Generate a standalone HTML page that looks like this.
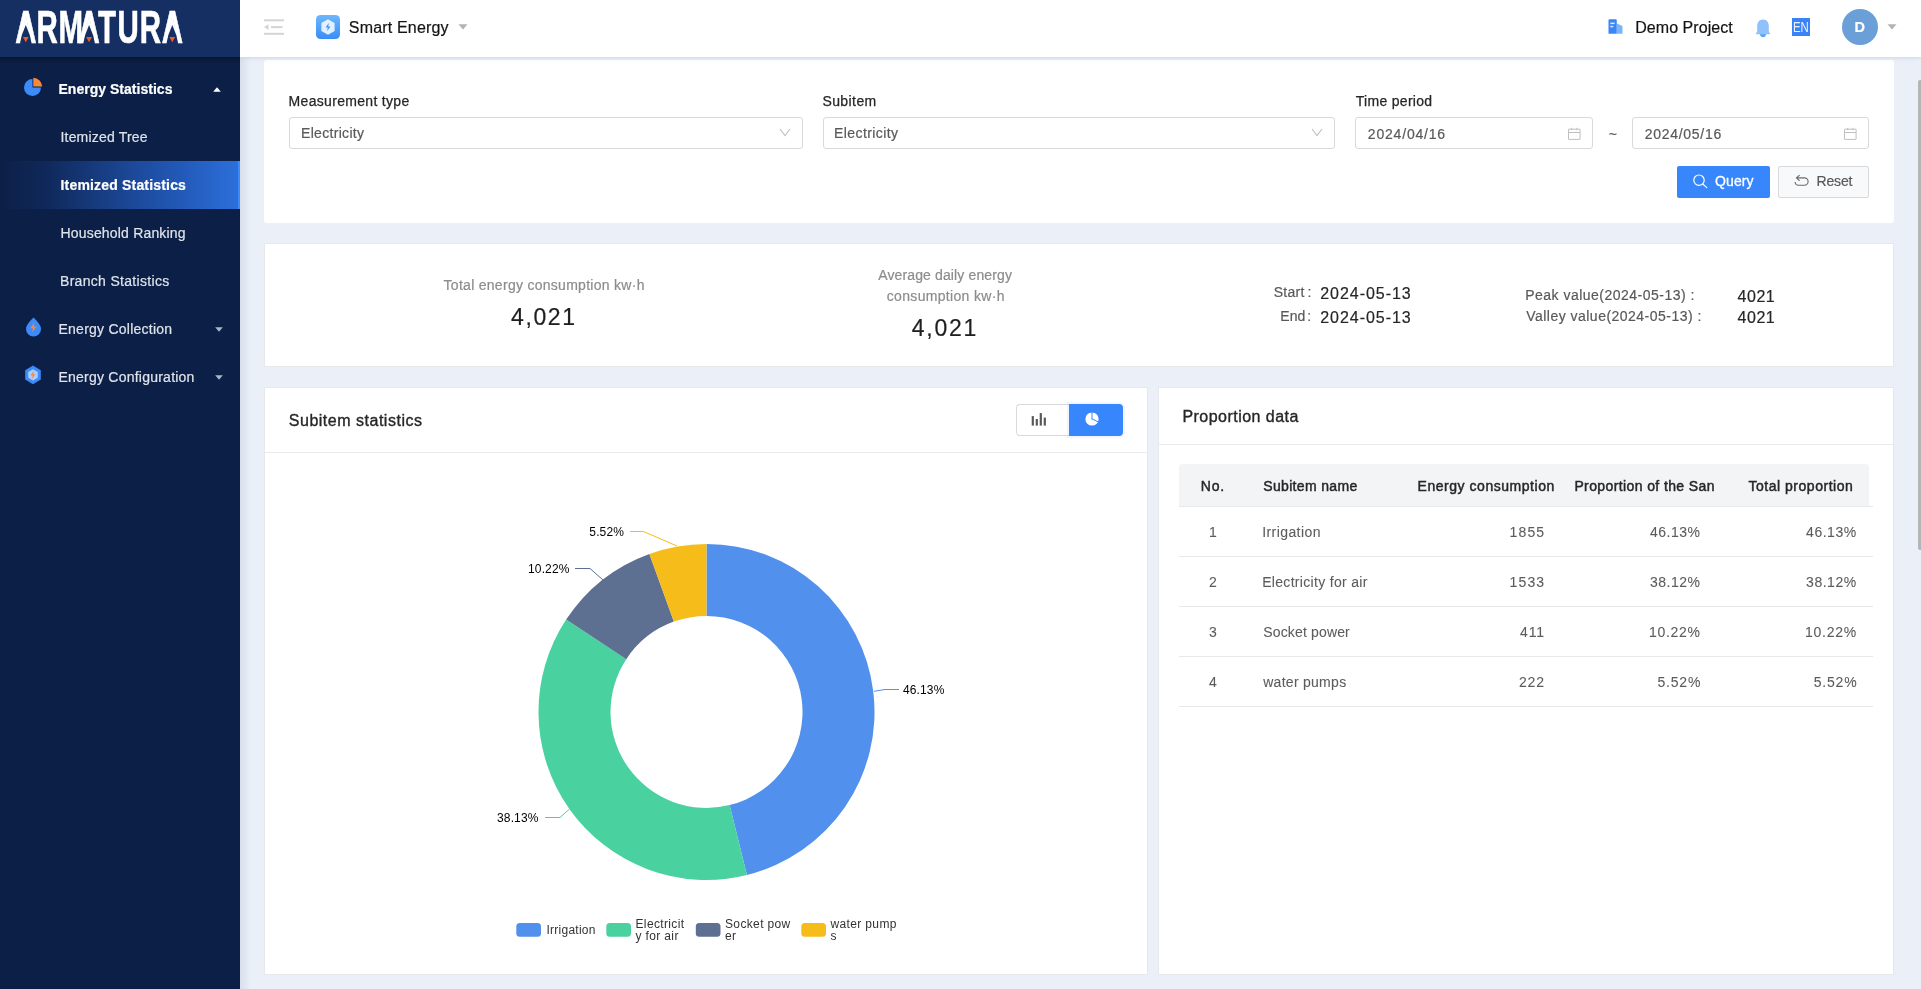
<!DOCTYPE html>
<html lang="en">
<head>
<meta charset="utf-8">
<title>Smart Energy - Itemized Statistics</title>
<style>
*{box-sizing:border-box;margin:0;padding:0}
html,body{width:1921px;height:989px;overflow:hidden}
body{font-family:"Liberation Sans",sans-serif;background:#ebf0f8;color:#1f1f1f;position:relative}
.abs{position:absolute}
.t{position:absolute;white-space:nowrap;line-height:1;-webkit-text-stroke:0.2px}
/* sidebar */
#side{position:absolute;left:0;top:0;width:240px;height:989px;background:#0c1f47}
#logo{position:absolute;left:0;top:0;width:240px;height:57px;background:#152f63}
#sideshadow{position:absolute;left:240px;top:57px;width:11px;height:932px;background:linear-gradient(90deg,rgba(190,200,215,.42),rgba(235,240,248,0))}
.mi{color:#dfe3ea;font-size:14px}
.mib{color:#fff;font-size:14px;font-weight:bold}
#active{position:absolute;left:0;top:161px;width:240px;height:48px;background:linear-gradient(90deg,#0c1f47 0%,#10295b 20%,#1a4490 50%,#2259b8 75%,#2c6fda 99.100%,#3b8bff 99.200%)}
/* header */
#hdr{position:absolute;left:240px;top:0;width:1681px;height:57px;background:#fff;box-shadow:0 1px 4px rgba(120,140,170,.26)}
/* cards */
.card{position:absolute;background:#fff}
.inp{position:absolute;height:32px;border:1px solid #d9d9d9;border-radius:3px;background:#fff}
.lbl{font-size:14px;color:#262626;-webkit-text-stroke:0.25px}
.val{font-size:14px;color:#595959}
.th{font-size:14px;color:#262626;-webkit-text-stroke:0.45px #262626}
.td{font-size:14px;color:#5c5c5c;-webkit-text-stroke:0.08px}
</style>
</head>
<body>
<div id="root" style="position:absolute;left:0;top:0;width:1921px;height:989px;will-change:transform;background:#ebf0f8">
<!-- CONTENT -->
<div id="content">
 <!-- filter card -->
 <div class="card" style="left:264px;top:60px;width:1630px;height:163px;border-radius:3px"></div>
 <div class="t lbl" id="f_l1" style="left:288.6px;letter-spacing:0.31px;top:94px">Measurement type</div>
 <div class="inp" style="left:289px;top:117px;width:514px"></div>
 <div class="t val" id="f_v1" style="left:301px;letter-spacing:0.31px;top:126px">Electricity</div>
 <svg class="abs" style="left:779px;top:128.200px" width="12" height="9" viewBox="0 0 12 9"><path d="M1 1 L6 7.5 L11 1" fill="none" stroke="#bfbfbf" stroke-width="1.1"/></svg>
 <div class="t lbl" id="f_l2" style="left:822.4px;letter-spacing:0.42px;top:94px">Subitem</div>
 <div class="inp" style="left:823px;top:117px;width:512px"></div>
 <div class="t val" id="f_v2" style="left:834px;letter-spacing:0.42px;top:126px">Electricity</div>
 <svg class="abs" style="left:1311px;top:128.200px" width="12" height="9" viewBox="0 0 12 9"><path d="M1 1 L6 7.5 L11 1" fill="none" stroke="#bfbfbf" stroke-width="1.1"/></svg>
 <div class="t lbl" id="f_l3" style="left:1355.8px;letter-spacing:0.29px;top:94px">Time period</div>
 <div class="inp" style="left:1355px;top:117px;width:238px"></div>
 <div class="t val" id="f_v3" style="left:1367.8px;letter-spacing:0.81px;top:127px">2024/04/16</div>
 <svg class="abs cal" style="left:1567.700px;top:126.800px" width="13" height="13" viewBox="0 0 13 13"><g fill="none" stroke="#bfbfbf" stroke-width="1"><rect x="0.500" y="2.200" width="11.600" height="10.200" rx="0.300"/><path d="M0.500 5.500 H12 M3.700 0.800 V3.200 M8.900 0.800 V3.200"/></g></svg>
 <div class="t val" id="f_tl" style="left:1608.800px;top:127px">~</div>
 <div class="inp" style="left:1632px;top:117px;width:237px"></div>
 <div class="t val" id="f_v4" style="left:1644.8px;letter-spacing:0.7px;top:127px">2024/05/16</div>
 <svg class="abs cal" style="left:1843.700px;top:126.800px" width="13" height="13" viewBox="0 0 13 13"><g fill="none" stroke="#bfbfbf" stroke-width="1"><rect x="0.500" y="2.200" width="11.600" height="10.200" rx="0.300"/><path d="M0.500 5.500 H12 M3.700 0.800 V3.200 M8.900 0.800 V3.200"/></g></svg>
 <div class="abs" style="left:1677px;top:166px;width:93px;height:32px;background:#3786fb;border-radius:2px"></div>
 <svg class="abs" style="left:1692px;top:173px" width="16" height="16" viewBox="0 0 16 16"><circle cx="7" cy="7.200" r="5.200" fill="none" stroke="#fff" stroke-width="1.200"/><path d="M10.800 11 L14.800 14.600" stroke="#fff" stroke-width="1.200" stroke-linecap="round"/></svg>
 <div class="t" id="b_q" style="left:1715px;letter-spacing:0.12px;top:174px;font-size:14px;color:#fff;-webkit-text-stroke:0.3px #fff">Query</div>
 <div class="abs" style="left:1778px;top:166px;width:91px;height:32px;background:#f8f9fa;border:1px solid #d9d9d9;border-radius:2px"></div>
 <svg class="abs" style="left:1794px;top:174px" width="16" height="13" viewBox="0 0 16 13"><path d="M2.800 3.900 H10.400 A3.700 3.700 0 0 1 10.400 11.300 H4.600 Q1.400 11.300 1.100 8.300 M5.300 1.300 L2.400 3.900 L5.300 6.500" fill="none" stroke="#6b6b6b" stroke-width="1.100" stroke-linecap="round" stroke-linejoin="round"/></svg>
 <div class="t" id="b_r" style="left:1816.4px;letter-spacing:-0.12px;top:174px;font-size:14px;color:#595959">Reset</div>

 <!-- stats card -->
 <div class="card" style="left:264px;top:243px;width:1630px;height:124px;border:1px solid #e6e8ec"></div>
 <div class="t" id="s_t1" style="left:443.6px;letter-spacing:0.28px;top:278px;font-size:14px;color:#8c8c8c">Total energy consumption kw·h</div>
 <div class="t" id="s_n1" style="left:511px;letter-spacing:1.6px;top:306px;font-size:23px;color:#1f1f1f">4,021</div>
 <div class="t" id="s_t2" style="left:878.2px;letter-spacing:0.13px;top:268px;font-size:14px;color:#8c8c8c">Average daily energy</div>
 <div class="t" id="s_t3" style="left:886.8px;letter-spacing:0.32px;top:289px;font-size:14px;color:#8c8c8c">consumption kw·h</div>
 <div class="t" id="s_n2" style="left:911.8px;letter-spacing:1.75px;top:317px;font-size:23px;color:#1f1f1f">4,021</div>
 <div class="t" id="s_st" style="left:1273.700px;top:285px;font-size:14px;color:#595959;letter-spacing:0.300px">Start<span style="margin-left:2.800px">:</span></div>
 <div class="t" id="s_sd" style="left:1320.2px;letter-spacing:0.97px;top:286px;font-size:16px;color:#262626">2024-05-13</div>
 <div class="t" id="s_en" style="left:1280.300px;top:309px;font-size:14px;color:#595959">End<span style="margin-left:2px">:</span></div>
 <div class="t" id="s_ed" style="left:1320.2px;letter-spacing:0.97px;top:310px;font-size:16px;color:#262626">2024-05-13</div>
 <div class="t" id="s_pk" style="left:1525.2px;letter-spacing:0.49px;top:288px;font-size:14px;color:#595959">Peak value(2024-05-13) :</div>
 <div class="t" id="s_vl" style="left:1526.2px;letter-spacing:0.48px;top:309px;font-size:14px;color:#595959">Valley value(2024-05-13) :</div>
 <div class="t" id="s_pv" style="left:1737.6px;letter-spacing:0.5px;top:289px;font-size:16px;color:#262626">4021</div>
 <div class="t" id="s_vv" style="left:1737.6px;letter-spacing:0.5px;top:310px;font-size:16px;color:#262626">4021</div>

 <!-- chart card -->
 <div class="card" style="left:264px;top:387px;width:884px;height:588px;border:1px solid #e6e8ec"></div>
 <div class="abs" style="left:265px;top:452px;width:882px;height:1px;background:#ebebeb"></div>
 <div class="t" id="c_t" style="left:288.8px;letter-spacing:0.51px;top:413px;font-size:16px;color:#262626;-webkit-text-stroke:0.35px">Subitem statistics</div>
 <div class="abs" style="left:1016px;top:404px;width:54px;height:32px;background:#fff;border:1px solid #d9d9d9;border-right:0;border-radius:4px 0 0 4px"></div>
 <div class="abs" style="left:1069px;top:404px;width:54px;height:32px;background:#3786fb;border-radius:0 4px 4px 0;box-shadow:0 0 0 2px rgba(58,133,248,.08)"></div>
 <svg class="abs" style="left:1031px;top:412px" width="16" height="15" viewBox="0 0 16 15"><g fill="#595959"><rect x="0.700" y="4.100" width="2.200" height="9.500"/><rect x="4.700" y="7" width="2.200" height="6.600"/><rect x="8.700" y="1.100" width="2.200" height="12.500"/><rect x="12.700" y="5.600" width="2.200" height="8"/></g></svg>
 <svg class="abs" style="left:1083.500px;top:411.400px" width="16" height="16" viewBox="0 0 16 16"><circle cx="8" cy="8" r="6.600" fill="#fff"/><path d="M8 8.300 V0.800 M7.700 7.800 L14.800 11.100" stroke="#3786fb" stroke-width="1" fill="none"/></svg>
 <svg class="abs" id="pie" style="left:265px;top:453px" width="881" height="520" viewBox="265 453 881 520" font-family="Liberation Sans, sans-serif">
  <path d="M706.50 543.90 A168 168 0 0 1 746.95 874.96 L729.61 805.08 A96 96 0 0 0 706.50 615.90Z" fill="#5190ec"/>
  <path d="M746.95 874.96 A168 168 0 0 1 566.14 619.58 L626.30 659.14 A96 96 0 0 0 729.61 805.08Z" fill="#4ad1a0"/>
  <path d="M566.14 619.58 A168 168 0 0 1 649.39 553.90 L673.87 621.62 A96 96 0 0 0 626.30 659.14Z" fill="#5d7092"/>
  <path d="M649.39 553.90 A168 168 0 0 1 706.50 543.90 L706.50 615.90 A96 96 0 0 0 673.87 621.62Z" fill="#f6bc1a"/>
  <g fill="none" stroke-width="1">
  <path d="M874 691.300 L885 689.500 H899" stroke="#5190ec"/>
  <path d="M569.500 809 L560 817.500 H545" stroke="#4ad1a0"/>
  <path d="M603 580 L590 568.500 H575" stroke="#5d7092"/>
  <path d="M677 546 L643.500 531.500 H630" stroke="#f6bc1a"/>
  </g>
  <g font-size="12" fill="#000" letter-spacing="0.12">
  <text id="pl1" x="903" y="693.500">46.13%</text>
  <text id="pl2" x="538.500" y="821.500" text-anchor="end">38.13%</text>
  <text id="pl3" x="569.500" y="572.500" text-anchor="end">10.22%</text>
  <text id="pl4" x="624" y="535.500" text-anchor="end">5.52%</text>
  </g>
  <rect x="516.3" y="923" width="24.700" height="13.700" rx="3.500" fill="#5190ec"/>
  <rect x="606.3" y="923" width="24.700" height="13.700" rx="3.500" fill="#4ad1a0"/>
  <rect x="695.8" y="923" width="24.700" height="13.700" rx="3.500" fill="#5d7092"/>
  <rect x="801.3" y="923" width="24.700" height="13.700" rx="3.500" fill="#f6bc1a"/>
  <g font-size="12" fill="#333" letter-spacing="0.36">
  <text id="lg1" x="546.500" y="934" letter-spacing="0.25">Irrigation</text>
  <text id="lg2a" x="635.500" y="928">Electricit</text><text id="lg2b" x="635.500" y="940">y for air</text>
  <text id="lg3a" x="725" y="928">Socket pow</text><text id="lg3b" x="725" y="940">er</text>
  <text id="lg4a" x="830.500" y="928">water pump</text><text id="lg4b" x="830.500" y="940">s</text>
  </g>
 </svg>

 <!-- table card -->
 <div class="card" style="left:1158px;top:387px;width:736px;height:588px;border:1px solid #e6e8ec"></div>
 <div class="abs" style="left:1159px;top:444px;width:734px;height:1px;background:#ebebeb"></div>
 <div class="t" id="p_t" style="left:1182.4px;letter-spacing:0.47px;top:409px;font-size:16px;color:#262626;-webkit-text-stroke:0.35px">Proportion data</div>
 <div class="abs" style="left:1179px;top:464px;width:690px;height:42px;background:#f3f4f6;border-radius:3px 3px 0 0"></div>
 <div id="tbl">
  <div class="t th" id="th1" style="left:1200.8px;letter-spacing:0.75px;top:479px">No.</div>
  <div class="t th" id="th2" style="left:1263.2px;letter-spacing:0.35px;top:479px">Subitem name</div>
  <div class="t th" id="th3" style="left:1417.6px;letter-spacing:0.53px;top:479px">Energy consumption</div>
  <div class="t th" id="th4" style="left:1574.4px;letter-spacing:0.39px;top:479px">Proportion of the San</div>
  <div class="t th" id="th5" style="left:1748.4px;letter-spacing:0.53px;top:479px">Total proportion</div>
  <div class="abs" style="left:1179px;top:556px;width:694px;height:1px;background:#e8e8e8"></div>
  <div class="t td" id="r0a" style="left:1203px;width:20px;text-align:center;top:525px">1</div>
  <div class="t td" id="r0b" style="left:1262.2px;letter-spacing:0.42px;top:525px">Irrigation</div>
  <div class="t td" id="r0c" style="left:1509.6px;letter-spacing:1.13px;top:525px">1855</div>
  <div class="t td" id="r0d" style="left:1649.9px;letter-spacing:0.52px;top:525px">46.13%</div>
  <div class="t td" id="r0e" style="left:1806.1px;letter-spacing:0.52px;top:525px">46.13%</div>
  <div class="abs" style="left:1179px;top:606px;width:694px;height:1px;background:#e8e8e8"></div>
  <div class="t td" id="r1a" style="left:1203px;width:20px;text-align:center;top:575px">2</div>
  <div class="t td" id="r1b" style="left:1262.2px;letter-spacing:0.31px;top:575px">Electricity for air</div>
  <div class="t td" id="r1c" style="left:1509.6px;letter-spacing:1.13px;top:575px">1533</div>
  <div class="t td" id="r1d" style="left:1649.9px;letter-spacing:0.52px;top:575px">38.12%</div>
  <div class="t td" id="r1e" style="left:1806.1px;letter-spacing:0.52px;top:575px">38.12%</div>
  <div class="abs" style="left:1179px;top:656px;width:694px;height:1px;background:#e8e8e8"></div>
  <div class="t td" id="r2a" style="left:1203px;width:20px;text-align:center;top:625px">3</div>
  <div class="t td" id="r2b" style="left:1263.2px;letter-spacing:0.16px;top:625px">Socket power</div>
  <div class="t td" id="r2c" style="left:1520.1px;letter-spacing:0.8px;top:625px">411</div>
  <div class="t td" id="r2d" style="left:1648.9px;letter-spacing:0.72px;top:625px">10.22%</div>
  <div class="t td" id="r2e" style="left:1805.1px;letter-spacing:0.72px;top:625px">10.22%</div>
  <div class="abs" style="left:1179px;top:706px;width:694px;height:1px;background:#e8e8e8"></div>
  <div class="t td" id="r3a" style="left:1203px;width:20px;text-align:center;top:675px">4</div>
  <div class="t td" id="r3b" style="left:1263.2px;letter-spacing:0.28px;top:675px">water pumps</div>
  <div class="t td" id="r3c" style="left:1519px;letter-spacing:0.8px;top:675px">222</div>
  <div class="t td" id="r3d" style="left:1657.5px;letter-spacing:0.8px;top:675px">5.52%</div>
  <div class="t td" id="r3e" style="left:1813.7px;letter-spacing:0.8px;top:675px">5.52%</div>
  <div class="abs" style="left:1179px;top:506px;width:694px;height:1px;background:#e8e8e8"></div>
 </div><!--/tbl-->
</div>
<div class="abs" style="left:1918px;top:80px;width:4px;height:470px;background:#b5b5b5;border-radius:2px 0 0 2px"></div>
<!-- HEADER -->
<div id="hdr">
 <svg class="abs" style="left:24px;top:18px" width="20" height="18" viewBox="0 0 20 18"><g fill="#d4d4d4"><rect x="0" y="1.3" width="20" height="2"/><rect x="7" y="8.1" width="11.5" height="2"/><rect x="0" y="14.8" width="20" height="2"/><path d="M0 9.1 L4.5 6.3 V11.9Z"/></g></svg>
 <svg class="abs" style="left:76px;top:15px" width="24" height="24" viewBox="0 0 24 24"><defs><linearGradient id="ag" x1="0" y1="0" x2="0" y2="1"><stop offset="0" stop-color="#6db7fc"/><stop offset="1" stop-color="#3a8df8"/></linearGradient></defs><rect width="24" height="24" rx="4.5" fill="url(#ag)"/><path d="M12 4.2 L18.6 8 V16 L12 19.8 L5.4 16 V8Z" fill="#e3f0ff"/><path d="M12.9 7.8 L9.6 12.6 H11.8 L11.1 16.2 L14.4 11.4 H12.2Z" fill="#3f90f8"/></svg>
 <div class="t" id="h_app" style="left:108.8px;letter-spacing:0.18px;top:20px;font-size:16px;color:#141414">Smart Energy</div>
 <svg class="abs" style="left:218px;top:24px" width="10" height="6" viewBox="0 0 10 6"><path d="M0.5 0.3 H9.5 L5 5.6Z" fill="#b3b3b3"/></svg>
 <svg class="abs" style="left:1368px;top:19px" width="15" height="15" viewBox="0 0 15 15"><path d="M0.5 1.5 Q0.5 0.3 1.7 0.3 H7.6 Q8.8 0.3 8.8 1.5 V14.7 H0.5Z" fill="#3a86f6"/><path d="M8.8 4.6 L13.5 6.4 Q14.5 6.8 14.5 7.8 V14.7 H8.8Z" fill="#7ab5fb"/><rect x="2.3" y="3.6" width="4.4" height="1.5" fill="#d8e9ff"/><rect x="2.3" y="6.8" width="3" height="1.5" fill="#d8e9ff"/></svg>
 <div class="t" id="h_proj" style="left:1395.2px;letter-spacing:0.06px;top:20px;font-size:16px;color:#141414">Demo Project</div>
 <svg class="abs" style="left:1515px;top:19px" width="16" height="19" viewBox="0 0 16 19"><path d="M4.600 14.600 H11.400 Q10.800 18.300 8 18.300 Q5.200 18.300 4.600 14.600Z" fill="#5aa3f8"/><path d="M8 0.500 C11.800 0.500 13.800 3.400 13.800 7 V12 Q13.800 13.300 14.900 14.100 Q15.300 14.500 15.100 15.300 H0.900 Q0.700 14.500 1.100 14.100 Q2.200 13.300 2.200 12 V7 C2.200 3.400 4.200 0.500 8 0.500Z" fill="#8fc1fb"/></svg>
 <div class="abs" style="left:1552px;top:18px;width:18px;height:18px;background:#3a83f6"></div>
 <div class="t" id="h_en" style="left:1553.300px;top:18.500px;font-size:15px;color:#eaf2ff;-webkit-text-stroke:0;transform:scaleX(0.76);transform-origin:0 0">EN</div>
 <div class="abs" style="left:1602px;top:9px;width:36px;height:36px;border-radius:50%;background:#6a9fd8"></div>
 <div class="t" id="h_d" style="left:1614.500px;top:19.500px;font-size:14.500px;font-weight:bold;color:#fff">D</div>
 <svg class="abs" style="left:1647px;top:24px" width="10" height="6" viewBox="0 0 10 6"><path d="M0.5 0.3 H9.5 L5 5.6Z" fill="#b3b3b3"/></svg>
</div>
<!-- SIDEBAR -->
<div id="side">
 <div id="logo">
  <svg class="abs" style="left:0;top:0" width="240" height="57" viewBox="0 0 240 57"><text id="logotxt" transform="scale(0.64,1)" x="23.7 57.0 91.6 122.6 153.0 183.6 218.3 252.6" y="42.800" font-family="Liberation Sans, sans-serif" font-weight="bold" font-size="46" fill="#fff" stroke="#fff" stroke-width="0.700">ARMATURA</text><g fill="#fff"><path d="M25.79 15.17 L22.64 30.22 L28.97 30.22Z"/><path d="M89.09 15.17 L85.94 30.22 L92.26 30.22Z"/><path d="M172.29 15.17 L169.14 30.22 L175.46 30.22Z"/></g><g fill="#152f63"><path d="M20.06 43.47 L21.94 34.71 L25.79 25.06 L29.66 34.71 L31.54 43.47Z"/><path d="M83.35 43.47 L85.23 34.71 L89.09 25.06 L92.95 34.71 L94.84 43.47Z"/><path d="M166.55 43.47 L168.43 34.71 L172.29 25.06 L176.15 34.71 L178.04 43.47Z"/></g><g fill="#f05a22"><path d="M22.89 36.900 H28.69 L25.79 42.300Z"/><path d="M86.19 36.900 H91.99 L89.09 42.300Z"/><path d="M169.39 36.900 H175.19 L172.29 42.300Z"/></g></svg>
 </div>
 <div class="abs" style="left:0;top:57px;width:240px;height:7px;background:linear-gradient(180deg,rgba(0,0,0,.28),rgba(0,0,0,0))"></div>
 <div id="active"></div>
 <svg class="abs" style="left:23px;top:77px" width="20" height="20" viewBox="0 0 20 20"><circle cx="9.500" cy="10.500" r="8.500" fill="#3d8bf8"/><path d="M9.500 10.500 V0.800 H11 A9 9 0 0 1 19.400 10.500Z" fill="#0c1f47"/><path d="M10.300 9.600 V0.800 A9 9 0 0 1 19.200 9.600Z" fill="#f6893a"/></svg>
 <div class="t mib" id="m1" style="left:58.5px;letter-spacing:0.02px;top:82px">Energy Statistics</div>
 <svg class="abs" style="left:213px;top:87px" width="8" height="5" viewBox="0 0 8 5"><path d="M4 0.300 L7.800 4.700 H0.200Z" fill="#fff"/></svg>
 <div class="t mi" id="m2" style="left:60.5px;letter-spacing:0.18px;top:130px">Itemized Tree</div>
 <div class="t mib" id="m3" style="left:60.5px;letter-spacing:0.18px;top:178px">Itemized Statistics</div>
 <div class="t mi" id="m4" style="left:60.5px;letter-spacing:0.18px;top:226px">Household Ranking</div>
 <div class="t mi" id="m5" style="left:60px;letter-spacing:0.31px;top:274px">Branch Statistics</div>
 <svg class="abs" style="left:25px;top:317px" width="17" height="20" viewBox="0 0 17 20"><path d="M8.500 0.500 Q16 7.500 16 12 A7.500 7.500 0 0 1 1 12 Q1 7.500 8.500 0.500Z" fill="#3d8bf8"/><path d="M9.400 5.200 L5.300 11.300 H8 L7.300 15.600 L11.400 9.500 H8.700Z" fill="#f6893a"/></svg>
 <div class="t mi" id="m6" style="left:58.5px;letter-spacing:0.24px;top:322px">Energy Collection</div>
 <svg class="abs" style="left:215px;top:327px" width="8" height="5" viewBox="0 0 8 5"><path d="M0.200 0.300 H7.800 L4 4.700Z" fill="#aeb6c6"/></svg>
 <svg class="abs" style="left:24px;top:365px" width="18" height="20" viewBox="0 0 18 20"><path d="M9 0.600 L16.800 5.200 V14.600 L9 19.200 L1.200 14.600 V5.200Z" fill="#3d8bf8"/><path d="M9 4.200 L13.800 7 V12.800 L9 15.600 L4.200 12.800 V7Z" fill="#a9cdfc"/><path d="M9.800 5.800 L6.600 10.500 H8.700 L8.100 14 L11.300 9.300 H9.200Z" fill="#f6893a"/></svg>
 <div class="t mi" id="m7" style="left:58.5px;letter-spacing:0.23px;top:370px">Energy Configuration</div>
 <svg class="abs" style="left:215px;top:375px" width="8" height="5" viewBox="0 0 8 5"><path d="M0.200 0.300 H7.800 L4 4.700Z" fill="#aeb6c6"/></svg>
</div>
<div id="sideshadow"></div>
</div>
</body>
</html>
